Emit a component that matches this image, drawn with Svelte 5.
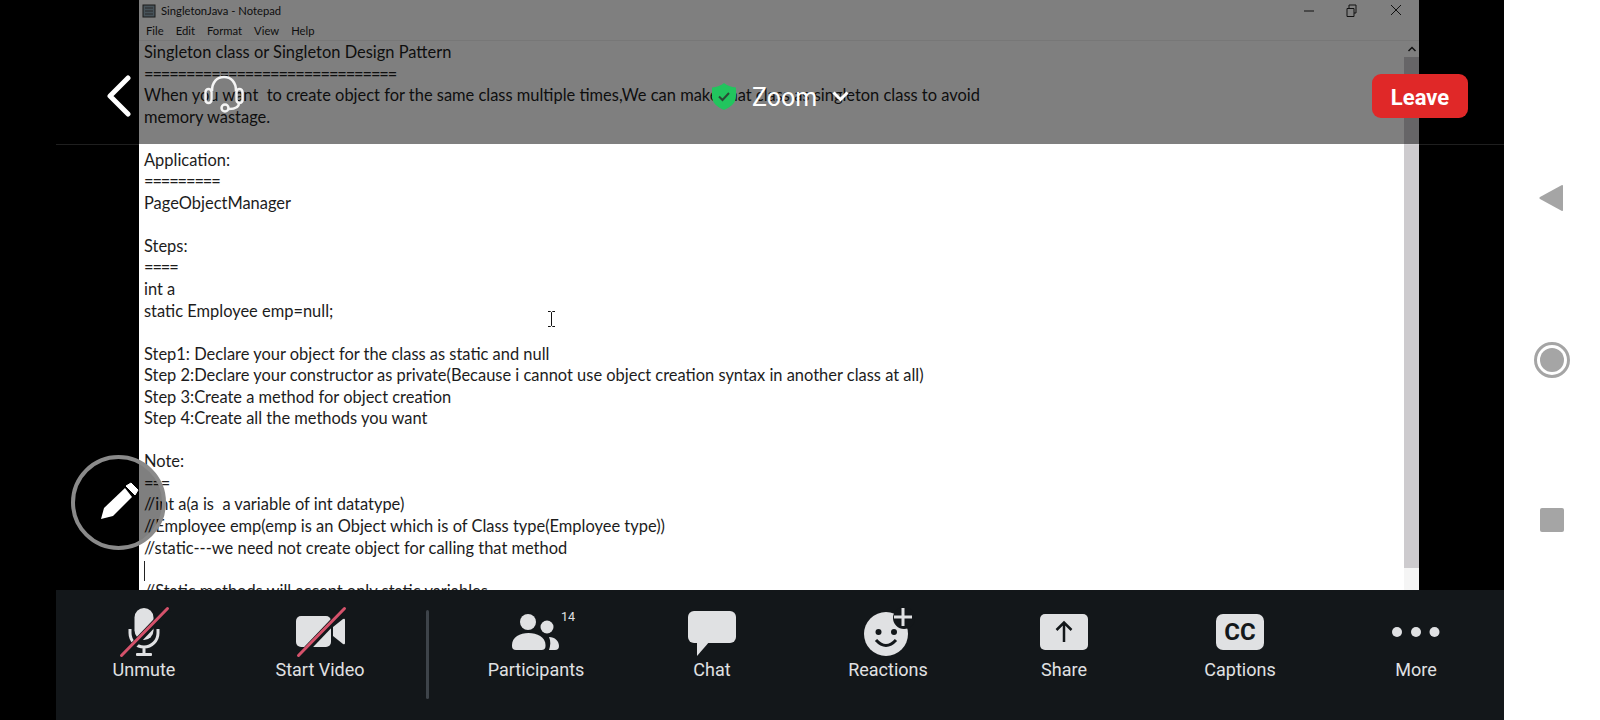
<script>
    const lines = [
        'Singleton class or Singleton Design Pattern',
        '==============================',
        'When you want  to create object for the same class multiple times,We can make that class as singleton class to avoid',
        'memory wastage.',
        '',
        'Application:',
        '=========',
        'PageObjectManager',
        '',
        'Steps:',
        '====',
        'int a',
        'static Employee emp=null;',
        '',
        'Step1: Declare your object for the class as static and null',
        'Step 2:Declare your constructor as private(Because i cannot use object creation syntax in another class at all)',
        'Step 3:Create a method for object creation',
        'Step 4:Create all the methods you want',
        '',
        'Note:',
        '===',
        '//int a(a is  a variable of int datatype)',
        '//Employee emp(emp is an Object which is of Class type(Employee type))',
        '//static---we need not create object for calling that method',
        '|',
        '//Static methods will accept only static variables'
    ];
    const menus = ['File', 'Edit', 'Format', 'View', 'Help'];
</script>

<div class="screen">
    <div class="phone">
        <div class="stage">
            <div class="notepad">
                <div class="titlebar">
                    <svg class="np-icon" width="14" height="14" viewBox="0 0 14 14">
                        <rect x="1" y="1" width="12" height="12" fill="#8fa6b5" stroke="#333"/>
                        <path d="M3 4h8M3 7h8M3 10h8" stroke="#555"/>
                    </svg>
                    <span>SingletonJava - Notepad</span>
                    <div class="win-btns">
                        <svg width="110" height="16" viewBox="0 0 110 16" fill="none" stroke="#222">
                            <path d="M0 10h10"/>
                            <path d="M43 7.500h7v8h-7zM45 7V4h7v8h-2"/>
                            <path d="M87 4l10 10M97 4L87 14"/>
                        </svg>
                    </div>
                </div>
                <div class="menubar">
                    {#each menus as m}
                        <span>{m}</span>
                    {/each}
                </div>
                <div class="editor">
                    <div class="text">
                        {#each lines as line}
                            {#if line === '|'}
                                <div class="line"><i class="caret"></i></div>
                            {:else if /^=+$/.test(line)}
                                <div class="line rule">{line}</div>
                            {:else}
                                <div class="line">{line}</div>
                            {/if}
                        {/each}
                    </div>
                    <div class="scrollbar">
                        <div class="sb-arrow">
                            <svg width="10" height="8" viewBox="0 0 10 8" fill="none" stroke="#222" stroke-width="1.5"><path d="M1.500 6L5 2.500 8.500 6"/></svg>
                        </div>
                        <div class="sb-thumb"></div>
                    </div>
                </div>
            </div>
        </div>

        <div class="topbar">
            <div class="tb-left">
                <svg width="24" height="42" viewBox="0 0 24 42" fill="none" stroke="#fff" stroke-width="5" stroke-linecap="round" stroke-linejoin="round">
                    <path d="M21 3L3 21l18 18"/>
                </svg>
                <svg class="headset" width="42" height="38" viewBox="0 0 42 38" fill="none" stroke="#f4f4f4" stroke-width="2.500">
                    <path d="M9 16C9 7 14 2 21 2s12 5 12 14"/>
                    <rect x="2.500" y="14" width="6" height="14" rx="3"/>
                    <rect x="33.500" y="14" width="6" height="14" rx="3"/>
                    <path d="M36 28c0 4-4 6-10 6"/>
                    <circle cx="22" cy="33" r="3.500"/>
                </svg>
            </div>
            <div class="tb-center">
                <svg width="26" height="27" viewBox="0 0 26 27">
                    <path d="M13 0c3 2.500 7 4 12 4.500V13c0 7-5 11-12 14C6 24 1 20 1 13V4.500C6 4 10 2.500 13 0z" fill="#22c55e"/>
                    <path d="M8 13.500l3.500 3.500L18 10" fill="none" stroke="#2a4a35" stroke-width="2"/>
                </svg>
                <span class="tb-title">Zoom</span>
                <svg width="17" height="11" viewBox="0 0 17 11" fill="none" stroke="#fff" stroke-width="3">
                    <path d="M1.500 1.500L8.500 8.500l7-7"/>
                </svg>
            </div>
            <div class="tb-right">
                <button class="leave">Leave</button>
            </div>
        </div>

        <button class="pen" aria-label="Annotate">
            <svg width="94" height="94" viewBox="0 0 94 94" fill="#fff">
                <path d="M29 64l3-11 21-20 7 9-19 19z"/>
                <path d="M54 31l5-3 7 7-3 5z" stroke="#fff" stroke-width="1" stroke-linejoin="round"/>
            </svg>
        </button>

        <svg class="ibeam" width="9" height="16" viewBox="0 0 9 16" fill="none" stroke="#111">
            <path d="M1 .5h2.500L4.500 1.500 5.500.5H8M4.500 1.500v13M1 15.500h2.500l1-1 1 1H8"/>
        </svg>

        <div class="toolbar">
            <div class="tool">
                <svg width="60" height="54" viewBox="0 0 60 54">
                    <rect x="20.500" y="3" width="19" height="32" rx="9.500" fill="#e0e1e3"/>
                    <path d="M16 24v4a14 14 0 0 0 28 0v-4M30 42v7" fill="none" stroke="#e0e1e3" stroke-width="3"/>
                    <rect x="22" y="48" width="16" height="3" rx="1" fill="#e0e1e3"/>
                    <path d="M9 51L54 4" stroke="#13171a" stroke-width="6.500"/>
                    <path d="M7.500 50.500L53.500 3.500" stroke="#d5526b" stroke-width="3" stroke-linecap="round"/>
                </svg>
                <span>Unmute</span>
            </div>
            <div class="tool">
                <svg width="60" height="54" viewBox="0 0 60 54">
                    <rect x="6" y="11" width="35" height="31" rx="5" fill="#e0e1e3"/>
                    <path d="M43 22l10-8q2-1 2 1v23q0 2-2 1l-10-8z" fill="#e0e1e3"/>
                    <path d="M10 51L55 4" stroke="#13171a" stroke-width="6.500"/>
                    <path d="M8.500 50.500L54.500 3.500" stroke="#d5526b" stroke-width="3" stroke-linecap="round"/>
                </svg>
                <span>Start Video</span>
            </div>
            <div class="divider-slot"><div class="divider"></div></div>
            <div class="tool">
                <svg width="60" height="54" viewBox="0 0 60 54" fill="#e0e1e3">
                    <circle cx="22" cy="17" r="8"/>
                    <circle cx="41" cy="22" r="6.500"/>
                    <path d="M6 40C6 32 14 28 22.500 28S39.500 32 39.500 40v1a4 4 0 0 1-4 4H10a4 4 0 0 1-4-4z"/>
                    <path d="M43 32c6 0 10 4 10 9a4 4 0 0 1-4 4h-6c1.500-4 2-9 0-13z"/>
                </svg>
                <span>Participants</span>
                <em class="count">14</em>
            </div>
            <div class="tool">
                <svg width="60" height="54" viewBox="0 0 60 54" fill="#e0e1e3">
                    <rect x="6" y="6" width="48" height="32" rx="6"/>
                    <path d="M15 36v15l13-15z"/>
                </svg>
                <span>Chat</span>
            </div>
            <div class="tool">
                <svg width="60" height="54" viewBox="0 0 60 54">
                    <ellipse cx="28" cy="29" rx="22" ry="22" fill="#e0e1e3"/>
                    <circle cx="46" cy="13" r="11" fill="#13171a"/>
                    <path d="M45 3v18M36 12h18" stroke="#e0e1e3" stroke-width="3"/>
                    <circle cx="20.500" cy="27" r="3" fill="#13171a"/>
                    <circle cx="36" cy="27" r="3" fill="#13171a"/>
                    <path d="M18 35q10 11 20 0" fill="none" stroke="#13171a" stroke-width="3"/>
                </svg>
                <span>Reactions</span>
            </div>
            <div class="tool">
                <svg width="60" height="54" viewBox="0 0 60 54">
                    <rect x="6" y="9" width="48" height="36" rx="5" fill="#e0e1e3"/>
                    <path d="M30 37V18M22.500 25l7.500-7.500 7.500 7.500" fill="none" stroke="#13171a" stroke-width="2.500"/>
                </svg>
                <span>Share</span>
            </div>
            <div class="tool">
                <svg width="60" height="54" viewBox="0 0 60 54">
                    <rect x="6" y="9" width="48" height="36" rx="7" fill="#e0e1e3"/>
                    <text x="30" y="35" text-anchor="middle" class="cc">CC</text>
                </svg>
                <span>Captions</span>
            </div>
            <div class="tool">
                <svg width="60" height="54" viewBox="0 0 60 54" fill="#e0e1e3">
                    <circle cx="11" cy="27" r="5"/>
                    <circle cx="30" cy="27" r="5"/>
                    <circle cx="48.500" cy="27" r="5"/>
                </svg>
                <span>More</span>
            </div>
        </div>
    </div>

    <div class="nav">
        <svg class="nav-back" width="26" height="28" viewBox="0 0 26 28"><path d="M25 2v24q0 1.500-1.500.8L2 15q-1.500-1 0-2L23.500 1.200Q25 .5 25 2z" fill="#a5a5a5"/></svg>
        <svg width="36" height="36" viewBox="0 0 36 36"><circle cx="18" cy="18" r="16.500" fill="none" stroke="#a5a5a5" stroke-width="3"/><circle cx="18" cy="18" r="12" fill="#a5a5a5"/></svg>
        <div class="nav-square"></div>
    </div>
</div>

<style>
    :global(body) {
        margin: 0;
        background: #fff;
    }

    .screen {
        display: flex;
        width: 1600px;
        height: 720px;
        overflow: hidden;
    }

    .phone {
        position: relative;
        display: flex;
        flex-direction: column;
        width: 1504px;
        background: #000;
    }

    .stage {
        height: 590px;
        padding: 0 85px 0 139px;
        overflow: hidden;
    }

    .notepad {
        display: flex;
        flex-direction: column;
        height: 100%;
        background: #fff;
        font-family: Lato, "Open Sans", sans-serif;
        color: #1c1c1c;
    }

    .titlebar {
        display: flex;
        align-items: center;
        gap: 5px;
        height: 21px;
        padding-left: 3px;
        font-size: 11.25px;
    }

    .win-btns {
        display: flex;
        margin: -4px 5px 0 auto;
    }

    .menubar {
        display: flex;
        gap: 12px;
        align-items: center;
        height: 19px;
        padding-left: 7px;
        font-size: 11.25px;
        border-bottom: 1px solid #eee;
    }

    .editor {
        flex: 1;
        display: flex;
        min-height: 0;
    }

    .text {
        flex: 1;
        padding: 1px 0 0 5px;
        overflow: hidden;
        font-size: 16.45px;
    }

    .line {
        height: 21.56px;
        line-height: 21.56px;
        white-space: pre;
    }

    .rule {
        letter-spacing: -1.130px;
    }

    .caret {
        display: inline-block;
        width: 1px;
        height: 20px;
        background: #222;
        vertical-align: middle;
    }

    .scrollbar {
        display: flex;
        flex-direction: column;
        width: 15px;
        background: #f5f5f5;
    }

    .sb-arrow {
        display: flex;
        align-items: center;
        justify-content: center;
        height: 16px;
        background: #fff;
    }

    .sb-thumb {
        height: 511px;
        background: #cdcbce;
    }

    .topbar {
        position: absolute;
        top: 0;
        left: 56px;
        right: 0;
        height: 145px;
        display: grid;
        grid-template-columns: 1fr auto 1fr;
        align-items: center;
        padding: 0 36px;
        border-bottom: 1px solid rgba(255, 255, 255, 0.12);
        box-sizing: border-box;
        font-family: Roboto, sans-serif;
    }

    .topbar::before {
        content: "";
        position: absolute;
        inset: 0 0 0 -56px;
        background: rgba(0, 0, 0, 0.5);
    }

    .tb-left, .tb-center, .tb-right {
        position: relative;
        display: flex;
        align-items: center;
        margin-top: 48px;
    }

    .tb-left {
        gap: 72px;
        margin-left: 15px;
    }

    .headset {
        margin-top: -4px;
    }

    .tb-center {
        gap: 15px;
    }

    .tb-title {
        padding-top: 2px;
        font-size: 25px;
        color: #fff;
    }

    .tb-right {
        justify-content: flex-end;
    }

    .leave {
        width: 96px;
        height: 44px;
        padding: 3px 0 0;
        border: none;
        border-radius: 9px;
        background: #e02828;
        color: #fff;
        font: 700 22px Roboto, sans-serif;
    }

    .pen {
        position: absolute;
        left: 71px;
        top: 455px;
        width: 95px;
        height: 95px;
        padding: 0;
        border: 4px solid #8a8a8a;
        border-radius: 50%;
        box-sizing: border-box;
        background: rgba(0, 0, 0, 0.5);
    }

    .pen svg {
        position: absolute;
        left: -3px;
        top: -4px;
    }

    .ibeam {
        position: absolute;
        left: 547px;
        top: 311px;
    }

    .toolbar {
        display: flex;
        flex: 1;
        margin-left: 56px;
        padding-top: 15px;
        background: #13171a;
        font-family: Roboto, sans-serif;
        color: #e0e1e3;
    }

    .tool {
        position: relative;
        display: flex;
        flex-direction: column;
        align-items: center;
        width: 176px;
        font-size: 18px;
        line-height: 22px;
    }

    .count {
        position: absolute;
        left: 113px;
        top: 5px;
        font-style: normal;
        font-size: 12.500px;
        line-height: 14px;
    }

    .cc {
        font: 700 24px Roboto, sans-serif;
        fill: #13171a;
    }

    .divider-slot {
        display: flex;
        justify-content: center;
        width: 39px;
        margin-right: 1px;
    }

    .divider {
        width: 3px;
        height: 89px;
        margin-top: 5px;
        border-radius: 2px;
        background: #3e444a;
    }

    .nav {
        flex: 1;
        display: flex;
        flex-direction: column;
        align-items: center;
        gap: 130px;
        padding-top: 184px;
    }

    .nav-back {
        margin-right: 3px;
    }

    .nav-square {
        width: 24px;
        height: 24px;
        border-radius: 2px;
        background: #a5a5a5;
    }
</style>
